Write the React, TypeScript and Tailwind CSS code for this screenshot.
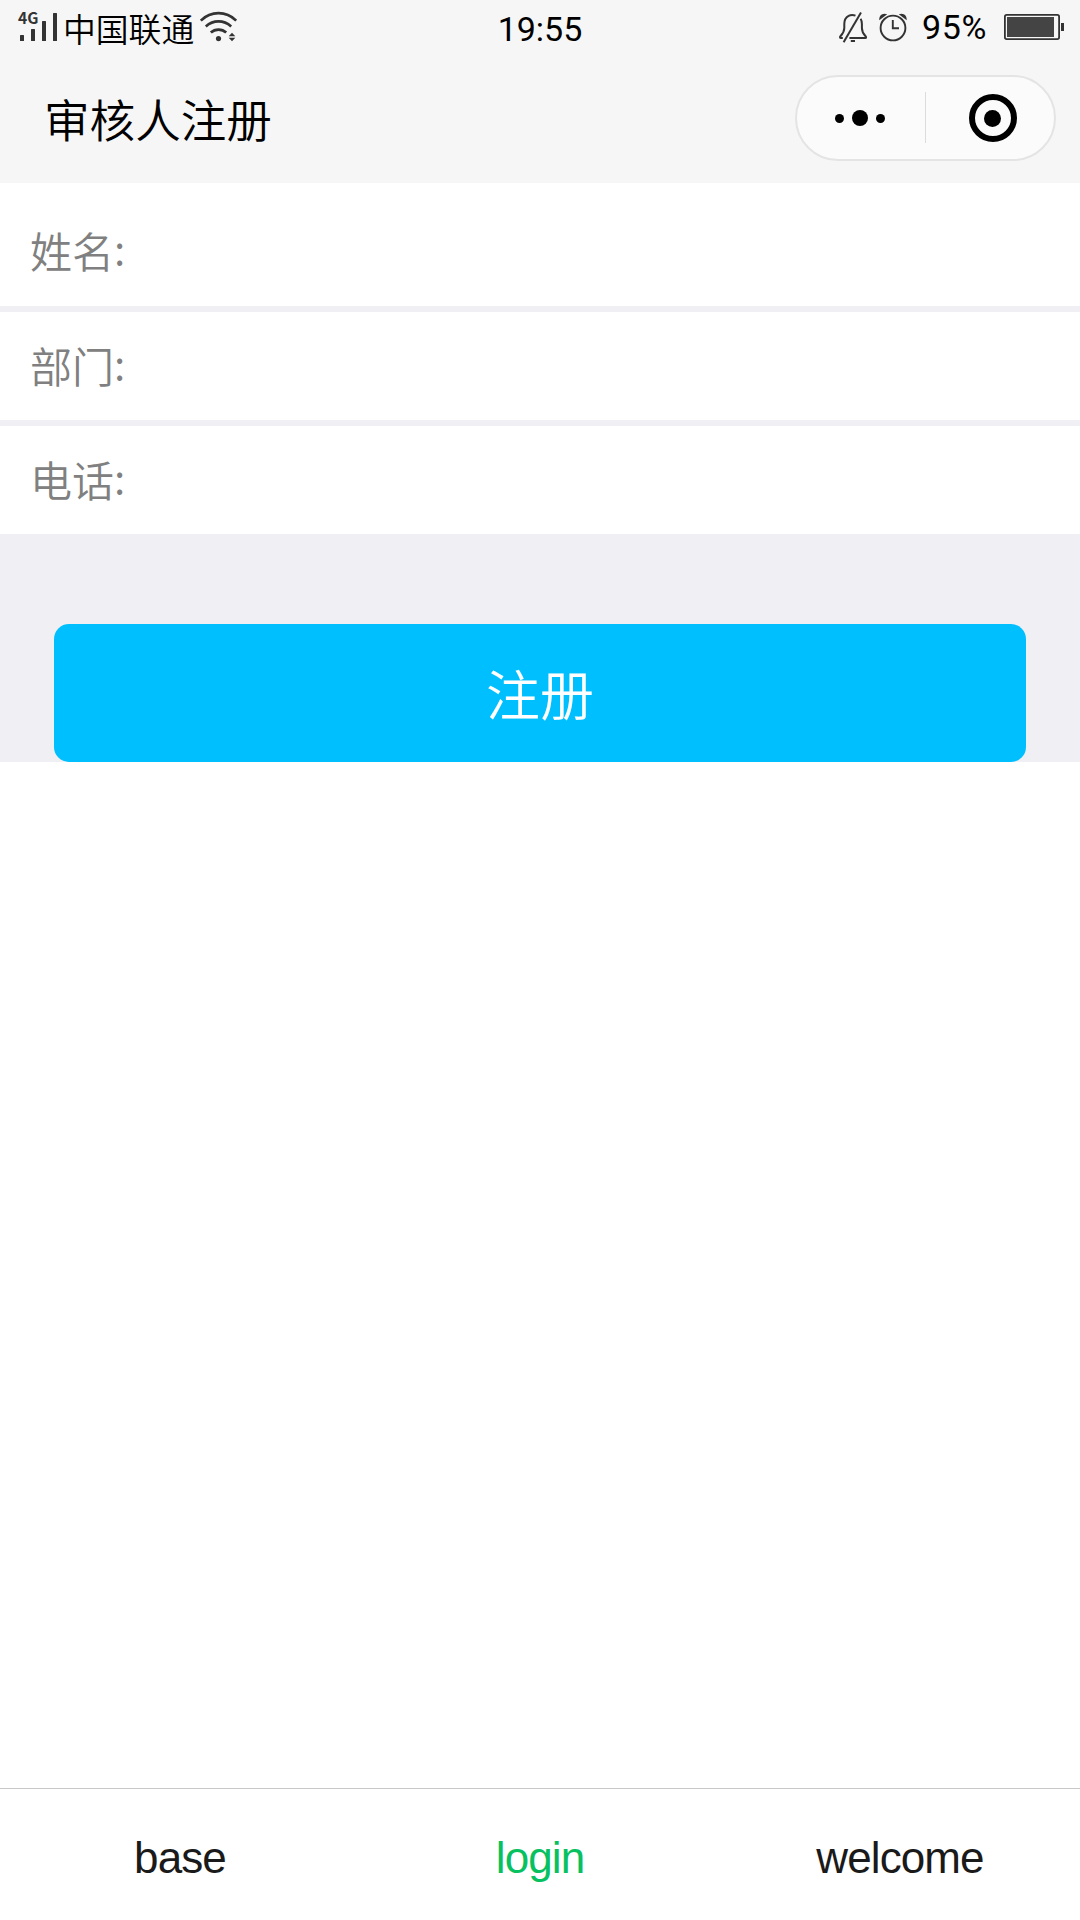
import { useState } from "react";
import clsx from "clsx";

const fields = [
  { id: "name", label: "姓名", row: "h-[123px] pt-[11px]" },
  { id: "department", label: "部门", row: "h-[108px] pb-[3px]" },
  { id: "phone", label: "电话", row: "h-[108px] pb-[3px]" },
];

const tabs = ["base", "login", "welcome"];

function SignalIcon() {
  return (
    <svg className="h-[60px] w-[60px] shrink-0" viewBox="0 0 60 60" fill="#333">
      <text x="18" y="24" fontSize="15.5" fontWeight="bold" textLength="20.5" lengthAdjust="spacingAndGlyphs">
        4G
      </text>
      <rect x="20" y="35" width="4" height="6" rx="0.5" />
      <rect x="31" y="29" width="4" height="12" rx="0.5" />
      <rect x="42" y="21" width="4" height="20" rx="0.5" />
      <rect x="53" y="13" width="4" height="28" rx="0.5" />
    </svg>
  );
}

function WifiIcon() {
  return (
    <svg className="h-[60px] w-[44px] shrink-0" viewBox="196 0 44 60" fill="none" stroke="#333" strokeWidth="2.7">
      <path d="M200.8 20.6Q208.5 13.2 218.5 13.2T236.2 20.6" />
      <path d="M205.8 26.4Q211.5 21.4 218.5 21.4T231.2 26.4" />
      <path d="M210.8 32.6Q214 29.6 218.5 29.6T226.2 32.6" />
      <circle cx="218.5" cy="38.6" r="2.6" fill="#333" stroke="none" />
      <path d="M232 32.8L235.3 36.2H228.7ZM232 41.2L235.3 37.8H228.7Z" fill="#333" stroke="none" />
    </svg>
  );
}

function MutedBellIcon() {
  return (
    <svg className="h-[60px] w-[32px] shrink-0" viewBox="837 0 32 60" fill="none" stroke="#333" strokeWidth="2">
      <path d="M855.5 15.6C853 14.6 850.5 14.8 848.6 15.9C845.5 17.6 844.3 20.5 844.3 24V28C844.3 32 842.5 34 840.6 36C839.5 37.3 840 38 841 38H842.8" />
      <path d="M860.6 18.8C861.6 20.4 861.9 22 861.9 24V28C861.9 32 863.5 34 865.4 36C866.5 37.3 866.2 38 865.2 38H849.4" />
      <path d="M861 12.4L843.6 42.2" />
      <path d="M850.8 41H855" />
    </svg>
  );
}

function AlarmIcon() {
  return (
    <svg className="h-[60px] w-[30px] shrink-0" viewBox="878 0 30 60" fill="none" stroke="#333" strokeWidth="1.9">
      <circle cx="893" cy="28" r="12.4" />
      <path d="M892.8 20V28.2H899" />
      <path d="M879.3 20.2C878.8 15.5 882.5 12.4 887.2 14.2ZM906.7 20.2C907.2 15.5 903.5 12.4 898.8 14.2Z" fill="#333" stroke="none" />
    </svg>
  );
}

function BatteryIcon() {
  return (
    <svg className="h-[60px] w-[62px] shrink-0" viewBox="1003 0 62 60">
      <rect x="1004.9" y="14.9" width="54.2" height="24.2" rx="1.8" fill="none" stroke="#333" strokeWidth="1.8" />
      <rect x="1007" y="17" width="47" height="20" fill="#444" />
      <rect x="1061" y="23" width="3" height="8" fill="#333" />
    </svg>
  );
}

function StatusBar() {
  return (
    <div className="grid h-[60px] grid-cols-3 text-black">
      <div className="flex">
        <SignalIcon />
        <span className="w-[136px] pl-[3px] text-[32.8px] leading-[55px] font-[350] whitespace-nowrap">中国联通</span>
        <WifiIcon />
      </div>
      <div className="text-center font-[Roboto,sans-serif] text-[34px] leading-[58px]">19:55</div>
      <div className="flex justify-end pr-[15px]">
        <MutedBellIcon />
        <span className="w-[9px]" />
        <AlarmIcon />
        <span className="w-[95px] pl-[14px] font-[Roboto,sans-serif] text-[34px] leading-[55px] tracking-[0.7px]">
          95%
        </span>
        <BatteryIcon />
      </div>
    </div>
  );
}

function Capsule() {
  return (
    <div className="mt-[15px] flex h-[86px] w-[261px] items-center rounded-full border-2 border-[#e4e4e4] bg-[#fbfbfb]">
      <button aria-label="more" className="flex h-full w-[128px] items-center justify-center gap-2 pr-[2px]">
        <span className="size-[9px] rounded-full bg-black" />
        <span className="size-4 rounded-full bg-black" />
        <span className="size-[9px] rounded-full bg-black" />
      </button>
      <span className="mb-[2px] h-[51px] w-px bg-[#dcdcdc]" />
      <button aria-label="close" className="flex h-full flex-1 items-center justify-center pl-[5px]">
        <span className="flex size-12 items-center justify-center rounded-full border-6 border-black">
          <span className="size-[17px] rounded-full bg-black" />
        </span>
      </button>
    </div>
  );
}

export default function App() {
  const [active, setActive] = useState("login");

  return (
    <div className="flex h-[1920px] w-[1080px] flex-col bg-white font-['Noto_Sans_CJK_SC',sans-serif]">
      <header className="h-[183px] bg-[#f6f6f6]">
        <StatusBar />
        <div className="flex justify-between pr-6 pl-[44px]">
          <h1 className="text-[45.6px] leading-[116px] font-[350] text-black">审核人注册</h1>
          <Capsule />
        </div>
      </header>

      <form className="flex flex-col bg-[#efeff4]">
        <div className="flex flex-col gap-[6px]">
          {fields.map((field) => (
            <label key={field.id} className={clsx("flex items-center bg-white pl-[30px]", field.row)}>
              <span className="text-[42px] leading-[60px] font-[350] text-[#808080]">
                {field.label}
                <span className="inline-block -translate-y-[3px]">:</span>
              </span>
              <input name={field.id} className="ml-4 flex-1 text-[42px] outline-none" />
            </label>
          ))}
        </div>
        <button
          type="button"
          className="mx-[54px] mt-[90px] h-[138px] rounded-[15px] bg-[#00bfff] text-[54px] leading-[134px] font-[350] text-white"
        >
          注册
        </button>
      </form>

      <nav className="mt-auto grid h-[132px] grid-cols-3 border-t border-[#c8c8c8] bg-white">
        {tabs.map((tab) => (
          <button
            key={tab}
            onClick={() => setActive(tab)}
            className={clsx(
              "pt-[6px] font-['Liberation_Sans',sans-serif] text-[44px] tracking-[-0.9px]",
              active === tab ? "text-[#07c160]" : "text-[#1a1a1a]",
            )}
          >
            {tab}
          </button>
        ))}
      </nav>
    </div>
  );
}
